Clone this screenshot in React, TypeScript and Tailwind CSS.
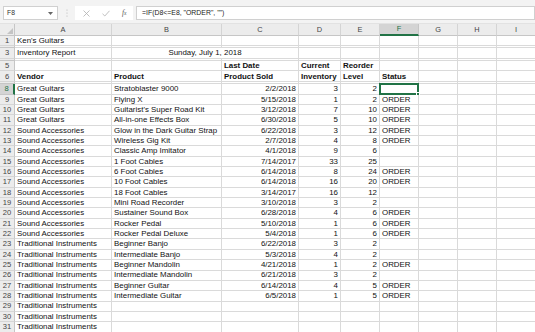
import React from "react";

type Row = {
  n: string;
  a?: string;
  b?: string;
  c?: string;
  d?: string;
  e?: string;
  f?: string;
};

const data: Row[] = [
  { n: "8", a: "Great Guitars", b: "Stratoblaster 9000", c: "2/2/2018", d: "3", e: "2", f: "" },
  { n: "9", a: "Great Guitars", b: "Flying X", c: "5/15/2018", d: "1", e: "2", f: "ORDER" },
  { n: "10", a: "Great Guitars", b: "Guitarist's Super Road Kit", c: "3/12/2018", d: "7", e: "10", f: "ORDER" },
  { n: "11", a: "Great Guitars", b: "All-in-one Effects Box", c: "6/30/2018", d: "5", e: "10", f: "ORDER" },
  { n: "12", a: "Sound Accessories", b: "Glow in the Dark Guitar Strap", c: "6/22/2018", d: "3", e: "12", f: "ORDER" },
  { n: "13", a: "Sound Accessories", b: "Wireless Gig Kit", c: "2/7/2018", d: "4", e: "8", f: "ORDER" },
  { n: "14", a: "Sound Accessories", b: "Classic Amp Imitator", c: "4/1/2018", d: "9", e: "6", f: "" },
  { n: "15", a: "Sound Accessories", b: "1 Foot Cables", c: "7/14/2017", d: "33", e: "25", f: "" },
  { n: "16", a: "Sound Accessories", b: "6 Foot Cables", c: "6/14/2018", d: "8", e: "24", f: "ORDER" },
  { n: "17", a: "Sound Accessories", b: "10 Foot Cables", c: "6/14/2018", d: "16", e: "20", f: "ORDER" },
  { n: "18", a: "Sound Accessories", b: "18 Foot Cables", c: "3/14/2017", d: "16", e: "12", f: "" },
  { n: "19", a: "Sound Accessories", b: "Mini Road Recorder", c: "3/10/2018", d: "3", e: "2", f: "" },
  { n: "20", a: "Sound Accessories", b: "Sustainer Sound Box", c: "6/28/2018", d: "4", e: "6", f: "ORDER" },
  { n: "21", a: "Sound Accessories", b: "Rocker Pedal", c: "5/10/2018", d: "1", e: "6", f: "ORDER" },
  { n: "22", a: "Sound Accessories", b: "Rocker Pedal Deluxe", c: "5/4/2018", d: "1", e: "6", f: "ORDER" },
  { n: "23", a: "Traditional Instruments", b: "Beginner Banjo", c: "6/22/2018", d: "3", e: "2", f: "" },
  { n: "24", a: "Traditional Instruments", b: "Intermediate Banjo", c: "5/3/2018", d: "4", e: "2", f: "" },
  { n: "25", a: "Traditional Instruments", b: "Beginner Mandolin", c: "4/21/2018", d: "1", e: "2", f: "ORDER" },
  { n: "26", a: "Traditional Instruments", b: "Intermediate Mandolin", c: "6/21/2018", d: "3", e: "2", f: "" },
  { n: "27", a: "Traditional Instruments", b: "Beginner Guitar", c: "6/14/2018", d: "4", e: "5", f: "ORDER" },
  { n: "28", a: "Traditional Instruments", b: "Intermediate Guitar", c: "6/5/2018", d: "1", e: "5", f: "ORDER" },
  { n: "29", a: "Traditional Instruments" },
  { n: "30", a: "Traditional Instruments" },
  { n: "31", a: "Traditional Instruments" },
];

const cellBase =
  "shrink-0 h-full border-r border-b border-[#dadada] flex items-end px-[2px] pb-[0.5px] whitespace-nowrap leading-[9px]";

function RowHead({ n, active }: { n: string; active?: boolean }) {
  return (
    <div
      className={
        "shrink-0 w-[15px] h-full border-b flex items-end justify-center leading-[9px] pb-[0.5px] text-[7.6px] font-normal " +
        (active
          ? "bg-[#d4d4d4] text-[#217346] border-r-2 border-r-[#217346] border-b-[#c6c6c6]"
          : "bg-[#ececec] text-[#444] border-r border-r-[#c6c6c6] border-b-[#d6d6d6]")
      }
    >
      {n}
    </div>
  );
}

function GapRow() {
  return (
    <div className="flex h-[2px]">
      <div className="shrink-0 w-[15px] h-full bg-[#ececec] border-r border-b border-[#c6c6c6]" />
      <div className="shrink-0 w-[97px] h-full border-r border-b border-[#dadada]" />
      <div className="shrink-0 w-[110px] h-full border-r border-b border-[#dadada]" />
      <div className="shrink-0 w-[77px] h-full border-r border-b border-[#dadada]" />
      <div className="shrink-0 w-[42px] h-full border-r border-b border-[#dadada]" />
      <div className="shrink-0 w-[39px] h-full border-r border-b border-[#dadada]" />
      <div className="shrink-0 w-[39px] h-full border-r border-b border-[#dadada]" />
      <div className="shrink-0 w-[39px] h-full border-r border-b border-[#dadada]" />
      <div className="shrink-0 w-[39px] h-full border-r border-b border-[#dadada]" />
      <div className="shrink-0 w-[39px] h-full border-r border-b border-[#dadada]" />
    </div>
  );
}

function TailCells() {
  return (
    <>
      <div className={cellBase + " w-[39px]"} />
      <div className={cellBase + " w-[39px]"} />
      <div className={cellBase + " w-[39px]"} />
    </>
  );
}

function DataRow({ r }: { r: Row }) {
  const active = r.n === "8";
  return (
    <div className="flex h-[10.35px]">
      <RowHead n={r.n} active={active} />
      <div className={cellBase + " w-[97px]"}>{r.a}</div>
      <div className={cellBase + " w-[110px]"}>{r.b}</div>
      <div className={cellBase + " w-[77px] justify-end"}>{r.c}</div>
      <div className={cellBase + " w-[42px] justify-end"}>{r.d}</div>
      <div className={cellBase + " w-[39px] justify-end"}>{r.e}</div>
      <div className={cellBase + " w-[39px] relative"}>
        {r.f}
        {active && (
          <div className="absolute left-[-1px] top-[-1px] right-[-1px] bottom-[-1px] border-2 border-[#217346]">
            <div className="absolute right-[-3px] bottom-[-3px] w-[4px] h-[4px] bg-[#217346] border border-white" />
          </div>
        )}
      </div>
      <TailCells />
    </div>
  );
}

export default function App() {
  return (
    <div className="w-[535px] h-[332px] overflow-hidden bg-white font-['Liberation_Sans',Arial,sans-serif] text-[7.9px] text-[#111]">
      {/* Formula bar */}
      <div className="h-[24px] bg-[#f3f3f3] flex items-start pt-[6px] pl-[3px] border-b border-[#e2e2e2]">
        <div className="w-[55px] h-[14px] bg-white border border-[#d0d0d0] flex items-center justify-between pl-[3px] pr-[4px]">
          <span className="text-[6.8px] text-[#333] leading-none">F8</span>
          <svg width="5" height="3" viewBox="0 0 5 3">
            <path d="M0 0 L5 0 L2.5 3 Z" fill="#666" />
          </svg>
        </div>
        <div className="w-[17px] h-[14px] flex items-center justify-center">
          <svg width="2" height="8" viewBox="0 0 2 8">
            <circle cx="1" cy="1" r="0.6" fill="#b5b5b5" />
            <circle cx="1" cy="4" r="0.6" fill="#b5b5b5" />
            <circle cx="1" cy="7" r="0.6" fill="#b5b5b5" />
          </svg>
        </div>
        <div className="w-[58px] h-[14px] bg-white flex items-center pl-[8px] gap-[12px]">
          <svg width="7" height="7" viewBox="0 0 7 7">
            <path d="M0.5 0.5 L6.5 6.5 M6.5 0.5 L0.5 6.5" stroke="#b0b0b0" strokeWidth="0.8" />
          </svg>
          <svg width="8" height="7" viewBox="0 0 8 7">
            <path d="M0.5 3.8 L2.8 6 L7.5 0.8" stroke="#b0b0b0" strokeWidth="0.8" fill="none" />
          </svg>
          <span className="font-['Liberation_Serif',serif] italic text-[7.5px] text-[#555] leading-none">
            f<span className="text-[5.5px]">x</span>
          </span>
        </div>
        <div className="flex-1 h-[14px] bg-white border border-[#d0d0d0] ml-[3px] pl-[5px] flex items-center text-[6.9px] text-[#222] leading-none">
          {'=IF(D8<=E8, "ORDER", "")'}
        </div>
      </div>

      {/* Column headers */}
      <div className="flex h-[12px] text-[7.4px] text-[#444]">
        <div className="shrink-0 w-[15px] h-full bg-[#ececec] border-r border-b border-[#c6c6c6] relative">
          <svg className="absolute right-[1px] bottom-[1px]" width="6" height="6" viewBox="0 0 6 6">
            <path d="M6 0 L6 6 L0 6 Z" fill="#c4c4c4" />
          </svg>
        </div>
        {[
          ["A", "w-[97px]"],
          ["B", "w-[110px]"],
          ["C", "w-[77px]"],
          ["D", "w-[42px]"],
          ["E", "w-[39px]"],
          ["F", "w-[39px]"],
          ["G", "w-[39px]"],
          ["H", "w-[39px]"],
          ["I", "w-[39px]"],
        ].map(([l, w]) => (
          <div
            key={l}
            className={
              "shrink-0 h-full border-r flex items-center justify-center " +
              w +
              (l === "F"
                ? " bg-[#d4d4d4] text-[#217346] border-b-2 border-b-[#217346] border-r-[#c6c6c6]"
                : " bg-[#ececec] border-b border-b-[#c6c6c6] border-r-[#d4d4d4]")
            }
          >
            {l}
          </div>
        ))}
      </div>

      {/* Row 1 */}
      <div className="flex h-[10.35px]">
        <RowHead n="1" />
        <div className={cellBase + " w-[97px]"}>Ken's Guitars</div>
        <div className={cellBase + " w-[110px]"} />
        <div className={cellBase + " w-[77px]"} />
        <div className={cellBase + " w-[42px]"} />
        <div className={cellBase + " w-[39px]"} />
        <div className={cellBase + " w-[39px]"} />
        <TailCells />
      </div>
      <GapRow />
      {/* Row 3 */}
      <div className="flex h-[10.35px]">
        <RowHead n="3" />
        <div className={cellBase + " w-[97px]"}>Inventory Report</div>
        <div className={cellBase + " w-[187px] justify-center"}>Sunday, July 1, 2018</div>
        <div className={cellBase + " w-[42px]"} />
        <div className={cellBase + " w-[39px]"} />
        <div className={cellBase + " w-[39px]"} />
        <TailCells />
      </div>
      <GapRow />
      {/* Row 5 */}
      <div className="flex h-[10.35px]">
        <RowHead n="5" />
        <div className={cellBase + " w-[97px]"} />
        <div className={cellBase + " w-[110px]"} />
        <div className={cellBase + " w-[77px] font-bold"}>Last Date</div>
        <div className={cellBase + " w-[42px] font-bold"}>Current</div>
        <div className={cellBase + " w-[39px] font-bold"}>Reorder</div>
        <div className={cellBase + " w-[39px]"} />
        <TailCells />
      </div>
      {/* Row 6 */}
      <div className="flex h-[11.3px]">
        <RowHead n="6" />
        <div className={cellBase + " w-[97px] font-bold"}>Vendor</div>
        <div className={cellBase + " w-[110px] font-bold"}>Product</div>
        <div className={cellBase + " w-[77px] font-bold"}>Product Sold</div>
        <div className={cellBase + " w-[42px] font-bold"}>Inventory</div>
        <div className={cellBase + " w-[39px] font-bold"}>Level</div>
        <div className={cellBase + " w-[39px] font-bold"}>Status</div>
        <TailCells />
      </div>
      <GapRow />
      {data.map((r) => (
        <DataRow key={r.n} r={r} />
      ))}
    </div>
  );
}
